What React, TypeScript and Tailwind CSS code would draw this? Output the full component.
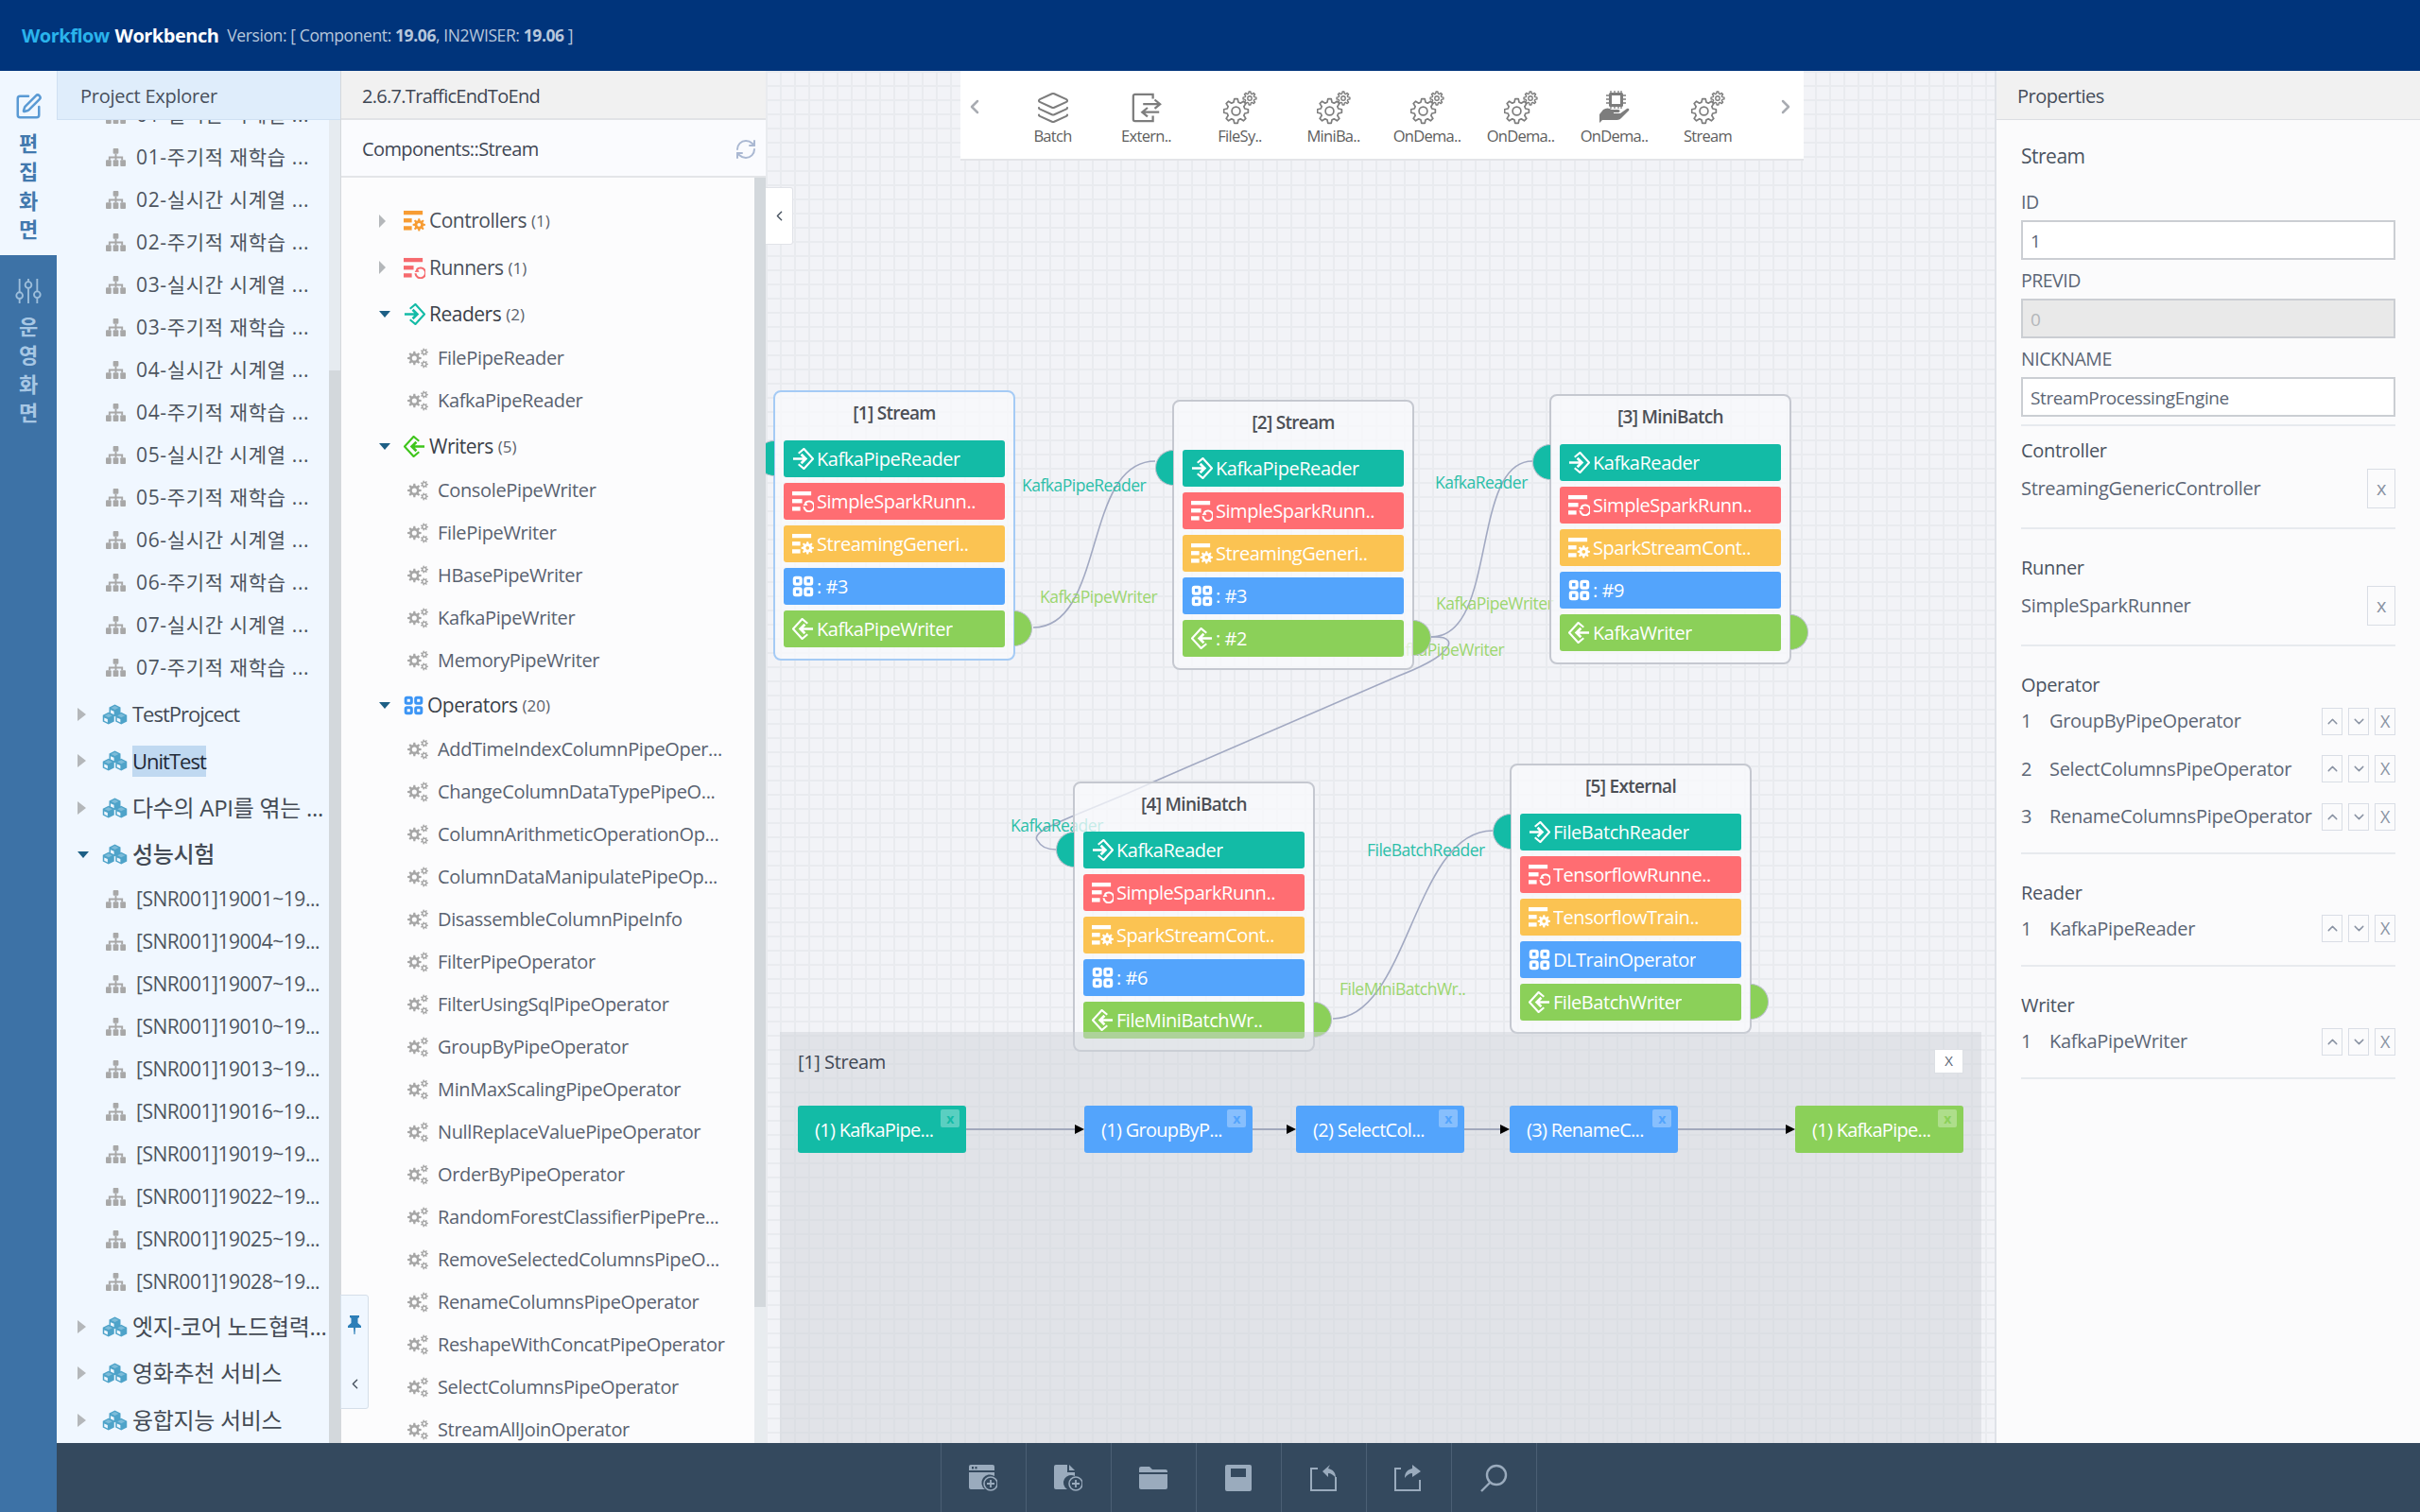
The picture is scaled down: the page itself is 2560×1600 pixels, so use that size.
import type { ReactNode } from "react";
import { ChevronLeft, ChevronRight, ChevronUp, ChevronDown, Layers, RefreshCw, SquarePen } from "lucide-react";

type RowKind = "reader" | "runner" | "controller" | "operator" | "writer";

interface NodeRow {
  kind: RowKind;
  text: string;
}

const rowColors: Record<RowKind, string> = {
  reader: "bg-[#13bba6]",
  runner: "bg-[#ff6d72]",
  controller: "bg-[#fbc352]",
  operator: "bg-[#53a4fc]",
  writer: "bg-[#8bd059]",
};

// outline of a toothed wheel, with an optional round hole
function gearPath(cx: number, cy: number, ro: number, ri: number, teeth: number, hole = 0) {
  const pts: string[] = [];
  const step = (Math.PI * 2) / teeth;
  for (let i = 0; i < teeth; i++) {
    const a = i * step;
    const corners: [number, number][] = [
      [ri, a - step * 0.34],
      [ro, a - step * 0.17],
      [ro, a + step * 0.17],
      [ri, a + step * 0.34],
    ];
    for (const [r, t] of corners) {
      pts.push(`${(cx + r * Math.cos(t)).toFixed(2)} ${(cy + r * Math.sin(t)).toFixed(2)}`);
    }
  }
  let d = `M${pts.join("L")}Z`;
  if (hole > 0) {
    d += `M${cx - hole} ${cy}a${hole} ${hole} 0 1 0 ${hole * 2} 0a${hole} ${hole} 0 1 0 ${-hole * 2} 0Z`;
  }
  return d;
}

function ReaderIcon({ className }: { className?: string }) {
  return (
    <svg viewBox="0 0 24 24" fill="none" stroke="currentColor" strokeWidth="2.2" className={className}>
      <path d="M7 6l6-5 10 11-10 11-6-5" />
      <path d="M1 12h14M10 7l5 5-5 5" strokeWidth="2.8" />
    </svg>
  );
}

function WriterIcon({ className }: { className?: string }) {
  return (
    <svg viewBox="0 0 24 24" fill="none" stroke="currentColor" strokeWidth="2.2" className={className}>
      <path d="M17 6l-6-5L1 12l10 11 6-5" />
      <path d="M23 12H9M14 7l-5 5 5 5" strokeWidth="2.8" />
    </svg>
  );
}

function ControllerIcon({ className }: { className?: string }) {
  return (
    <svg viewBox="0 0 24 24" fill="currentColor" className={className}>
      <rect x="0" y="1" width="21" height="4.5" />
      <rect x="0" y="9.5" width="9" height="4.5" />
      <rect x="0" y="18" width="9" height="4.5" />
      <path fillRule="evenodd" d={gearPath(17, 16.5, 7, 5, 8, 2)} />
    </svg>
  );
}

function RunnerIcon({ className }: { className?: string }) {
  return (
    <svg viewBox="0 0 24 24" fill="currentColor" className={className}>
      <rect x="0" y="1" width="21" height="4.5" />
      <rect x="0" y="9.5" width="11" height="4.5" />
      <rect x="0" y="18" width="9" height="4.5" />
      <path d="M14.8 12.2l-2.6 4.6 5-.4z" />
      <path d="M14.6 13.6a5.6 5.6 0 1 1-1.6 4.4" fill="none" stroke="currentColor" strokeWidth="2.2" />
    </svg>
  );
}

function OperatorIcon({ className }: { className?: string }) {
  return (
    <svg viewBox="0 0 24 24" fill="none" stroke="currentColor" strokeWidth="3.4" className={className}>
      <rect x="2.5" y="2.5" width="7" height="7" rx="1.5" />
      <rect x="14.5" y="2.5" width="7" height="7" rx="1.5" />
      <rect x="2.5" y="14.5" width="7" height="7" rx="1.5" />
      <rect x="14.5" y="14.5" width="7" height="7" rx="1.5" />
    </svg>
  );
}

const rowIcons = {
  reader: ReaderIcon,
  runner: RunnerIcon,
  controller: ControllerIcon,
  operator: OperatorIcon,
  writer: WriterIcon,
};

function GearsIcon({ className }: { className?: string }) {
  return (
    <svg viewBox="0 0 24 24" fill="currentColor" className={className}>
      <path fillRule="evenodd" d={gearPath(8, 12, 8, 5.6, 8, 2.8)} />
      <path fillRule="evenodd" d={gearPath(19.5, 5, 4.4, 3, 7, 1.5)} />
      <path fillRule="evenodd" d={gearPath(19.5, 19, 4.4, 3, 7, 1.5)} />
    </svg>
  );
}

function OutlineGears({ className }: { className?: string }) {
  return (
    <svg viewBox="0 0 36 36" fill="none" stroke="currentColor" strokeWidth="1.7" className={className}>
      <path d={gearPath(13.5, 21.5, 13, 9.6, 8)} strokeLinejoin="round" />
      <circle cx="13.5" cy="21.5" r="4.4" />
      <path d={gearPath(28, 8, 7, 5, 8)} strokeWidth="1.4" strokeLinejoin="round" />
      <circle cx="28" cy="8" r="2.2" strokeWidth="1.4" />
    </svg>
  );
}

function ExternIcon({ className }: { className?: string }) {
  return (
    <svg viewBox="0 0 36 36" fill="none" stroke="currentColor" strokeWidth="2.4" className={className}>
      <path d="M25 8V3H5a2 2 0 0 0-2 2v26a2 2 0 0 0 2 2h20v-6" />
      <path d="M14 14h18M27 9l6 5-6 5" />
      <path d="M32 23H14M19 18l-6 5 6 5" />
    </svg>
  );
}

function AiHandIcon({ className }: { className?: string }) {
  return (
    <svg viewBox="0 0 36 36" fill="currentColor" className={className}>
      <rect x="12" y="2" width="15" height="15" rx="1.5" />
      <path d="M14 0v3M18 0v3M22 0v3M25 0v3M14 16v3M18 16v3M22 16v3M25 16v3M9 5h4M9 9h4M9 13h4M26 5h4M26 9h4M26 13h4" stroke="currentColor" strokeWidth="1.3" />
      <rect x="15" y="5" width="9" height="9" fill="#fff" />
      <path d="M6 20c3-2 6-2 9 0h7c2 0 2 3 0 3h-5v1h7l7-5c2-1 3 1 2 2l-8 8c-2 2-4 2-6 2H5l-3 3V25z" />
    </svg>
  );
}

function SitemapIcon({ className }: { className?: string }) {
  return (
    <svg viewBox="0 0 22 22" fill="currentColor" className={className}>
      <rect x="8" y="1" width="6" height="6" rx="1" />
      <rect x="0" y="14" width="6" height="7" rx="1" />
      <rect x="8" y="14" width="6" height="7" rx="1" />
      <rect x="16" y="14" width="6" height="7" rx="1" />
      <path d="M10 7h2v3h7v4h-2v-2h-5v2h-2v-2H5v2H3v-4h7z" />
    </svg>
  );
}

function CubesIcon({ className }: { className?: string }) {
  const cube = (dx: number, dy: number) => (
    <g transform={`translate(${dx} ${dy})`}>
      <path d="M9 0l8 4v9l-8 4-8-4V4z" fill="#4ea3c9" />
      <path d="M9 2L14.5 4.6 9 7.2 3.5 4.6z" fill="#7dbcd9" />
      <path d="M3 7.5l4.8 2.3v4.5L3 12z" fill="#f0f7ff" />
    </g>
  );
  return (
    <svg viewBox="0 0 36 28" className={className}>
      {cube(9, 0)}
      {cube(0, 11)}
      {cube(18, 11)}
    </svg>
  );
}

function SlidersIcon({ className }: { className?: string }) {
  return (
    <svg viewBox="0 0 28 30" fill="none" stroke="currentColor" strokeWidth="2" className={className}>
      <path d="M4 1v15M4 24v5M14 1v3M14 12v17M24 1v14M24 23v6" />
      <circle cx="4" cy="20" r="3.6" />
      <circle cx="14" cy="8" r="3.6" />
      <circle cx="24" cy="19" r="3.6" />
    </svg>
  );
}

function PinIcon({ className }: { className?: string }) {
  return (
    <svg viewBox="0 0 16 20" fill="currentColor" className={className}>
      <path d="M3 0h10v2l-1.5 1v5L15 11v2H9l-.5 7h-1L7 13H1v-2l3.5-3V3L3 2z" />
    </svg>
  );
}

function NewWindowIcon({ className }: { className?: string }) {
  return (
    <svg viewBox="0 0 30 30" fill="currentColor" className={className}>
      <path d="M2 1h23a2 2 0 0 1 2 2v4H0V3a2 2 0 0 1 2-2z" />
      <path d="M0 9h27v4a8 8 0 0 0-10 14H2a2 2 0 0 1-2-2z" />
      <circle cx="23" cy="21" r="7" fill="none" stroke="currentColor" strokeWidth="1.6" />
      <path d="M23 17v8M19 21h8" stroke="currentColor" strokeWidth="1.8" />
      <rect x="3" y="3" width="2" height="2.4" fill="#34495e" />
      <rect x="6.5" y="3" width="2" height="2.4" fill="#34495e" />
    </svg>
  );
}

function NewFileIcon({ className }: { className?: string }) {
  return (
    <svg viewBox="0 0 30 30" fill="currentColor" className={className}>
      <path d="M2 1h12v8h8v4a8 8 0 0 0-8 14H2a2 2 0 0 1-2-2V3a2 2 0 0 1 2-2z" />
      <path d="M16 1l6 6h-6z" />
      <circle cx="23" cy="21" r="7" fill="none" stroke="currentColor" strokeWidth="1.6" />
      <path d="M23 17v8M19 21h8" stroke="currentColor" strokeWidth="1.8" />
    </svg>
  );
}

function FolderIcon({ className }: { className?: string }) {
  return (
    <svg viewBox="0 0 30 30" fill="currentColor" className={className}>
      <path d="M2 3h9l3 3h14a2 2 0 0 1 2 2v1H0V5a2 2 0 0 1 2-2z" />
      <path d="M0 11h30v14a2 2 0 0 1-2 2H2a2 2 0 0 1-2-2z" />
    </svg>
  );
}

function SaveIcon({ className }: { className?: string }) {
  return (
    <svg viewBox="0 0 30 30" fill="currentColor" className={className}>
      <path fillRule="evenodd" d="M3 1h24a2 2 0 0 1 2 2v24a2 2 0 0 1-2 2H3a2 2 0 0 1-2-2V3a2 2 0 0 1 2-2zm4 4v9h16V5z" />
    </svg>
  );
}

function ImportIcon({ className }: { className?: string }) {
  return (
    <svg viewBox="0 0 30 30" fill="none" stroke="currentColor" strokeWidth="2" className={className}>
      <path d="M9 5H2v23h26V14" />
      <path d="M22 1l-8 7 6 6v-4c3 0 6 2 8 5 0-6-3-9-8-10z" fill="currentColor" stroke="none" />
    </svg>
  );
}

function ExportIcon({ className }: { className?: string }) {
  return (
    <svg viewBox="0 0 30 30" fill="none" stroke="currentColor" strokeWidth="2" className={className}>
      <path d="M7 5H1v23h26V17" />
      <path d="M19 1l9 7-9 6v-4c-3 0-6 2-8 5 0-6 3-9 8-10z" fill="currentColor" stroke="none" />
    </svg>
  );
}

function SearchIcon({ className }: { className?: string }) {
  return (
    <svg viewBox="0 0 30 30" fill="none" stroke="currentColor" strokeWidth="2.4" className={className}>
      <circle cx="18" cy="12" r="10" />
      <path d="M11 20l-9 9" />
    </svg>
  );
}

function FlowNode({
  title,
  rows,
  pos,
  selected,
}: {
  title: string;
  rows: NodeRow[];
  pos: string;
  selected?: boolean;
}) {
  return (
    <div
      className={`absolute ${pos} h-[286px] w-[256px] rounded-[8px] border-2 bg-[#f8f9fc]/75 ${
        selected ? "border-[#a5cbf5]" : "border-[#c5c8d0]"
      }`}
    >
      {/* ports */}
      <div className="absolute -left-[20px] top-[51px] h-[38px] w-[19px] rounded-l-full border border-[#b9bfca] border-r-0 bg-[#13bba6]" />
      <div className="absolute -right-[20px] top-[231px] h-[38px] w-[19px] rounded-r-full border border-[#b9bfca] border-l-0 bg-[#8bd059]" />

      <div className="flex h-[51px] items-center justify-center pb-[7px] text-[19px] font-semibold tracking-[-0.7px] text-[#4c4f55]">
        {title}
      </div>
      <div className="flex flex-col gap-[6px] px-[9px]">
        {rows.map((row, i) => {
          const Icon = rowIcons[row.kind];
          return (
            <div
              key={i}
              className={`flex h-[39px] items-center gap-[3px] rounded-[3px] pl-[9px] text-[20px] tracking-[-0.45px] text-white ${rowColors[row.kind]}`}
            >
              <Icon className="h-[23px] w-[23px] shrink-0" />
              <span className="truncate">{row.text}</span>
            </div>
          );
        })}
      </div>
    </div>
  );
}

const nodes = [
  {
    title: "[1] Stream",
    pos: "left-[8px] top-[338px]",
    selected: true,
    rows: [
      { kind: "reader", text: "KafkaPipeReader" },
      { kind: "runner", text: "SimpleSparkRunn.." },
      { kind: "controller", text: "StreamingGeneri.." },
      { kind: "operator", text: ": #3" },
      { kind: "writer", text: "KafkaPipeWriter" },
    ],
  },
  {
    title: "[2] Stream",
    pos: "left-[430px] top-[348px]",
    rows: [
      { kind: "reader", text: "KafkaPipeReader" },
      { kind: "runner", text: "SimpleSparkRunn.." },
      { kind: "controller", text: "StreamingGeneri.." },
      { kind: "operator", text: ": #3" },
      { kind: "writer", text: ": #2" },
    ],
  },
  {
    title: "[3] MiniBatch",
    pos: "left-[829px] top-[342px]",
    rows: [
      { kind: "reader", text: "KafkaReader" },
      { kind: "runner", text: "SimpleSparkRunn.." },
      { kind: "controller", text: "SparkStreamCont.." },
      { kind: "operator", text: ": #9" },
      { kind: "writer", text: "KafkaWriter" },
    ],
  },
  {
    title: "[4] MiniBatch",
    pos: "left-[325px] top-[752px]",
    rows: [
      { kind: "reader", text: "KafkaReader" },
      { kind: "runner", text: "SimpleSparkRunn.." },
      { kind: "controller", text: "SparkStreamCont.." },
      { kind: "operator", text: ": #6" },
      { kind: "writer", text: "FileMiniBatchWr.." },
    ],
  },
  {
    title: "[5] External",
    pos: "left-[787px] top-[733px]",
    rows: [
      { kind: "reader", text: "FileBatchReader" },
      { kind: "runner", text: "TensorflowRunne.." },
      { kind: "controller", text: "TensorflowTrain.." },
      { kind: "operator", text: "DLTrainOperator" },
      { kind: "writer", text: "FileBatchWriter" },
    ],
  },
] as { title: string; pos: string; selected?: boolean; rows: NodeRow[] }[];

const edgeLabels = [
  { text: "KafkaPipeReader", pos: "left-[271px] top-[426px]", color: "text-[#2cbfa9]" },
  { text: "KafkaPipeWriter", pos: "left-[290px] top-[544px]", color: "text-[#9cd66f]" },
  { text: "KafkaReader", pos: "left-[708px] top-[423px]", color: "text-[#2cbfa9]" },
  { text: "KafkaPipeWriter", pos: "left-[709px] top-[551px]", color: "text-[#9cd66f]" },
  { text: "KafkaPipeWriter", pos: "left-[657px] top-[600px]", color: "text-[#9cd66f]" },
  { text: "KafkaReader", pos: "left-[259px] top-[786px]", color: "text-[#2cbfa9]" },
  { text: "FileBatchReader", pos: "left-[636px] top-[812px]", color: "text-[#2cbfa9]" },
  { text: "FileMiniBatchWr..", pos: "left-[607px] top-[959px]", color: "text-[#9cd66f]" },
];

const paletteItems = [
  { label: "Batch", icon: "layers" },
  { label: "Extern..", icon: "extern" },
  { label: "FileSy..", icon: "gears" },
  { label: "MiniBa..", icon: "gears" },
  { label: "OnDema..", icon: "gears" },
  { label: "OnDema..", icon: "gears" },
  { label: "OnDema..", icon: "ai" },
  { label: "Stream", icon: "gears" },
];

const pipeline = [
  { text: "(1) KafkaPipe...", color: "bg-[#13bba6]", mark: "text-[#13bba6]", gap: "w-[125px]" },
  { text: "(1) GroupByP...", color: "bg-[#53a4fc]", mark: "text-[#53a4fc]", gap: "w-[46px]" },
  { text: "(2) SelectCol...", color: "bg-[#53a4fc]", mark: "text-[#53a4fc]", gap: "w-[48px]" },
  { text: "(3) RenameC...", color: "bg-[#53a4fc]", mark: "text-[#53a4fc]", gap: "w-[124px]" },
  { text: "(1) KafkaPipe...", color: "bg-[#8bd059]", mark: "text-[#8bd059]", gap: "" },
];

const projectRows = [
  "01-실시간 시계열 ...",
  "01-주기적 재학습 ...",
  "02-실시간 시계열 ...",
  "02-주기적 재학습 ...",
  "03-실시간 시계열 ...",
  "03-주기적 재학습 ...",
  "04-실시간 시계열 ...",
  "04-주기적 재학습 ...",
  "05-실시간 시계열 ...",
  "05-주기적 재학습 ...",
  "06-실시간 시계열 ...",
  "06-주기적 재학습 ...",
  "07-실시간 시계열 ...",
  "07-주기적 재학습 ...",
];

const perfRows = ["19001", "19004", "19007", "19010", "19013", "19016", "19019", "19022", "19025", "19028"];

const operators = [
  "AddTimeIndexColumnPipeOper...",
  "ChangeColumnDataTypePipeO...",
  "ColumnArithmeticOperationOp...",
  "ColumnDataManipulatePipeOp...",
  "DisassembleColumnPipeInfo",
  "FilterPipeOperator",
  "FilterUsingSqlPipeOperator",
  "GroupByPipeOperator",
  "MinMaxScalingPipeOperator",
  "NullReplaceValuePipeOperator",
  "OrderByPipeOperator",
  "RandomForestClassifierPipePre...",
  "RemoveSelectedColumnsPipeO...",
  "RenameColumnsPipeOperator",
  "ReshapeWithConcatPipeOperator",
  "SelectColumnsPipeOperator",
  "StreamAllJoinOperator",
];

const writers = ["ConsolePipeWriter", "FilePipeWriter", "HBasePipeWriter", "KafkaPipeWriter", "MemoryPipeWriter"];

function ProjectRow({ text, korean }: { text: string; korean?: boolean }) {
  return (
    <div
      className={`flex h-[45px] items-center pl-[52px] text-[21px] text-[#4d5560] ${
        korean ? "tracking-[0.65px]" : "tracking-[-0.45px]"
      }`}
    >
      <SitemapIcon className="mr-[11px] h-[21px] w-[21px] shrink-0 text-[#a8a8a8]" />
      <span className="whitespace-nowrap">{text}</span>
    </div>
  );
}

function ProjectGroup({
  text,
  open,
  selected,
  korean,
}: {
  text: string;
  open?: boolean;
  selected?: boolean;
  korean?: boolean;
}) {
  return (
    <div
      className={`flex h-[49.5px] items-center pl-[22px] text-[#444b55] ${
        korean ? "text-[24px] tracking-[-0.3px]" : "text-[22px] tracking-[-1px]"
      }`}
    >
      {open ? (
        <span className="mr-[14px] h-0 w-0 border-x-[6px] border-t-[7px] border-x-transparent border-t-[#1d5f85]" />
      ) : (
        <span className="mr-[17px] h-0 w-0 border-y-[7px] border-l-[9px] border-y-transparent border-l-[#b4b7ba]" />
      )}
      <CubesIcon className="mr-[5px] h-[24px] w-[27px] shrink-0" />
      <span
        className={`whitespace-nowrap ${selected ? "bg-[#c0d9f1] text-[#1f2937]" : ""} ${open ? "font-medium" : ""}`}
      >
        {text}
      </span>
    </div>
  );
}

function Category({
  label,
  count,
  open,
  icon,
}: {
  label: string;
  count: string;
  open?: boolean;
  icon: ReactNode;
}) {
  return (
    <div className="flex h-[49.5px] items-center pl-[40px] text-[21px] text-[#4a505a]">
      {open ? (
        <span className="mr-[14px] h-0 w-0 border-x-[6px] border-t-[7px] border-x-transparent border-t-[#1d5f85]" />
      ) : (
        <span className="mr-[19px] h-0 w-0 border-y-[7px] border-l-[7px] border-y-transparent border-l-[#b4b7ba]" />
      )}
      {icon}
      <span className={`ml-[4px] tracking-[-0.5px] ${open ? "font-medium text-[#3b4149]" : ""}`}>{label}</span>
      <span className="ml-[5px] text-[17px] text-[#5b626c]">{count}</span>
    </div>
  );
}

function Item({ text }: { text: string }) {
  return (
    <div className="flex h-[45px] items-center pb-[2px] pl-[70px] text-[20px] tracking-[-0.35px] text-[#596270]">
      <GearsIcon className="mr-[10px] h-[22px] w-[22px] shrink-0 text-[#a6a6a6]" />
      <span className="whitespace-nowrap">{text}</span>
    </div>
  );
}

function SmallButton({ children }: { children: ReactNode }) {
  return (
    <div className="flex h-[29px] w-[22px] items-center justify-center border border-[#d9dde5] text-[#8a93a3]">
      {children}
    </div>
  );
}

function PropRow({ index, name }: { index: string; name: string }) {
  return (
    <div className="flex h-[50.5px] items-center text-[20px] tracking-[-0.3px] text-[#5c6675]">
      <span className="w-[30px]">{index}</span>
      <span className="flex-1 whitespace-nowrap">{name}</span>
      <div className="flex gap-[6px]">
        <SmallButton>
          <ChevronUp className="h-[17px] w-[17px]" />
        </SmallButton>
        <SmallButton>
          <ChevronDown className="h-[17px] w-[17px]" />
        </SmallButton>
        <SmallButton>
          <span className="text-[18px]">X</span>
        </SmallButton>
      </div>
    </div>
  );
}

export default function App() {
  return (
    <div className="flex h-[1600px] w-[2560px] flex-col overflow-hidden bg-white font-['Open_Sans','Noto_Sans_CJK_KR',sans-serif]">
      {/* Top */}
      <header className="flex h-[75px] shrink-0 items-center bg-[#00347b] pl-[23px]">
        <span className="text-[20px] font-bold tracking-[-0.5px] text-[#2ab3ec]">Workflow</span>
        <span className="ml-[6px] text-[20px] font-bold tracking-[-0.5px] text-white">Workbench</span>
        <span className="ml-[9px] text-[17.5px] tracking-[-0.4px] text-[#b7c7dc]">
          Version: [ Component: <b>19.06</b>, IN2WISER: <b>19.06</b> ]
        </span>
      </header>

      <div className="flex min-h-0 flex-1">
        {/* Rail */}
        <aside className="flex w-[60px] shrink-0 flex-col bg-[#3d72a6]">
          <div className="flex h-[195px] flex-col items-center bg-[#f0f7ff] pt-[23px] text-[22px] font-semibold text-[#4279ae]">
            <SquarePen className="mb-[8px] h-[30px] w-[30px] text-[#5a9ad4]" />
            <span className="leading-[30.4px]">편</span>
            <span className="leading-[30.4px]">집</span>
            <span className="leading-[30.4px]">화</span>
            <span className="leading-[30.4px]">면</span>
          </div>
          <div className="flex flex-col items-center pt-[24px] text-[22px] font-semibold text-[#a7c7e4]">
            <SlidersIcon className="mb-[8px] h-[28px] w-[28px] text-[#9dbedb]" />
            <span className="leading-[30.4px]">운</span>
            <span className="leading-[30.4px]">영</span>
            <span className="leading-[30.4px]">화</span>
            <span className="leading-[30.4px]">면</span>
          </div>
        </aside>

        <div className="flex min-w-0 flex-1 flex-col">
          <div className="flex min-h-0 flex-1">
            {/* Project explorer */}
            <section className="flex w-[300px] shrink-0 flex-col bg-[#f0f7ff]">
              <div className="relative z-10 flex h-[52px] shrink-0 items-center border-b border-l border-[#cfe0f2] bg-[#dfedfb] pl-[24px] pt-[2px] text-[20px] tracking-[-0.25px] text-[#474f5c]">
                Project Explorer
              </div>
              <div className="flex min-h-0 flex-1">
                <div className="min-w-0 flex-1 overflow-hidden">
                  <div className="-mt-[28px]">
                    {projectRows.map((t, i) => (
                      <ProjectRow key={i} text={t} korean />
                    ))}
                    <div className="h-[2px]" />
                    <ProjectGroup text="TestProjcect" />
                    <ProjectGroup text="UnitTest" selected />
                    <ProjectGroup text="다수의 API를 엮는 ..." korean />
                    <ProjectGroup text="성능시험" open korean />
                    {perfRows.map((n) => (
                      <ProjectRow key={n} text={`[SNR001]${n}~19...`} />
                    ))}
                    <ProjectGroup text="엣지-코어 노드협력..." korean />
                    <ProjectGroup text="영화추천 서비스" korean />
                    <ProjectGroup text="융합지능 서비스" korean />
                  </div>
                </div>
                <div className="flex w-[12px] shrink-0 flex-col bg-[#d3d8dc]">
                  <div className="h-[265px] bg-[#e6ebf0]" />
                </div>
              </div>
            </section>

            {/* Components */}
            <section className="relative flex w-[450px] shrink-0 flex-col border-l border-[#d5d8dc] bg-[#fcfcfd]">
              <div className="flex h-[52px] shrink-0 items-center border-b-2 border-[#e1e3e6] bg-[#f1f1f1] pl-[22px] pt-[3px] text-[20px] tracking-[-0.7px] text-[#3f4754]">
                2.6.7.TrafficEndToEnd
              </div>
              <div className="flex h-[61px] shrink-0 items-center justify-between border-b-2 border-[#e3e5e8] bg-[#fafbfe] pl-[22px] pr-[9px] pt-[2px] text-[20px] tracking-[-0.6px] text-[#3f4754]">
                <span>Components::Stream</span>
                <RefreshCw className="h-[24px] w-[24px] text-[#aab8d2]" />
              </div>
              <div className="flex min-h-0 flex-1">
                <div className="min-w-0 flex-1 overflow-hidden pt-[21px]">
                  <Category
                    label="Controllers"
                    count="(1)"
                    icon={<ControllerIcon className="h-[23px] w-[23px] text-[#f79c33]" />}
                  />
                  <Category
                    label="Runners"
                    count="(1)"
                    icon={<RunnerIcon className="h-[23px] w-[23px] text-[#f66a6e]" />}
                  />
                  <Category
                    label="Readers"
                    count="(2)"
                    open
                    icon={<ReaderIcon className="h-[23px] w-[23px] text-[#13bba6]" />}
                  />
                  <Item text="FilePipeReader" />
                  <Item text="KafkaPipeReader" />
                  <Category
                    label="Writers"
                    count="(5)"
                    open
                    icon={<WriterIcon className="h-[23px] w-[23px] text-[#3fc51c]" />}
                  />
                  {writers.map((w) => (
                    <Item key={w} text={w} />
                  ))}
                  <Category
                    label="Operators"
                    count="(20)"
                    open
                    icon={<OperatorIcon className="h-[21px] w-[21px] text-[#3c95f5]" />}
                  />
                  {operators.map((o) => (
                    <Item key={o} text={o} />
                  ))}
                </div>
                <div className="flex w-[12px] shrink-0 flex-col bg-[#e8ecef]">
                  <div className="h-[1195px] bg-[#d3d8dc]" />
                </div>
              </div>

              {/* pin handle */}
              <div className="absolute -left-px bottom-[36px] flex h-[121px] w-[30px] flex-col items-center rounded-r-[3px] border border-[#d5dfe9] bg-[#f0f7ff] pt-[21px] text-[#2d7fb8]">
                <PinIcon className="h-[20px] w-[16px]" />
                <ChevronLeft className="mt-[44px] h-[17px] w-[17px] text-[#47525f]" />
              </div>
            </section>

            {/* Canvas */}
            <main className="relative min-w-0 flex-1 overflow-hidden bg-[#f2f3f7] bg-[linear-gradient(to_right,#e9ebef_2px,transparent_2px),linear-gradient(to_bottom,#e9ebef_2px,transparent_2px)] bg-[size:15px_15px]">
              {/* palette */}
              <div className="absolute left-[206px] top-0 z-20 flex h-[95px] w-[892px] items-start border-b-2 border-[#e3e4e8] bg-white">
                <ChevronLeft className="ml-[3px] mt-[26px] h-[24px] w-[24px] text-[#a9acb2]" strokeWidth={2.5} />
                <div className="ml-[21px] flex">
                  {paletteItems.map((item, i) => (
                    <div key={i} className="flex w-[99px] flex-col items-center pt-[21px] text-[#7d7d7d]">
                      <div className="flex h-[36px] items-center justify-center">
                        {item.icon === "layers" && <Layers className="h-[36px] w-[36px]" strokeWidth={1.4} />}
                        {item.icon === "extern" && <ExternIcon className="h-[34px] w-[34px]" />}
                        {item.icon === "gears" && <OutlineGears className="h-[36px] w-[36px]" />}
                        {item.icon === "ai" && <AiHandIcon className="h-[36px] w-[36px]" />}
                      </div>
                      <span className="whitespace-nowrap text-[16.5px] leading-[24px] tracking-[-0.7px] text-[#5e5e5e]">
                        {item.label}
                      </span>
                    </div>
                  ))}
                </div>
                <ChevronRight className="ml-[21px] mt-[26px] h-[24px] w-[24px] text-[#a9acb2]" strokeWidth={2.5} />
              </div>

              {/* collapse handle */}
              <div className="absolute left-0 top-[123px] z-20 flex h-[61px] w-[29px] items-center justify-center rounded-r-[3px] border border-l-0 border-[#e1e3e8] bg-white">
                <ChevronLeft className="h-[17px] w-[17px] text-[#47525f]" />
              </div>

              {/* edges */}
              <svg
                viewBox="810 75 1300 1452"
                className="absolute inset-0 h-[1452px] w-[1300px]"
                fill="none"
                stroke="#a2a9c2"
                strokeWidth="1.6"
              >
                <path d="M1093 664C1170 664 1145 488 1222 488" />
                <path d="M1514 674C1585 674 1555 488 1621 488" />
                <path d="M1514 674C1545 672 1540 692 1480 715L1221 827C1150 860 1085 878 1098 890C1102 898 1110 899 1117 899" />
                <path d="M1410 1078C1490 1078 1495 879 1579 879" />
              </svg>

              {edgeLabels.map((l, i) => (
                <span
                  key={i}
                  className={`absolute ${l.pos} whitespace-nowrap text-[17.5px] leading-[24px] tracking-[-0.5px] ${l.color}`}
                >
                  {l.text}
                </span>
              ))}

              {nodes.map((n) => (
                <FlowNode key={n.title} title={n.title} pos={n.pos} rows={n.rows} selected={n.selected} />
              ))}

              {/* pipeline detail */}
              <div className="absolute bottom-0 left-[15px] h-[435px] w-[1271px] bg-[#d0d4da]/50 px-[19px]">
                <div className="flex h-[78px] items-center justify-between pb-[15px] text-[20px] tracking-[-0.4px] text-[#3f4754]">
                  <span>[1] Stream</span>
                  <span className="mb-[2px] flex h-[26px] w-[31px] items-center justify-center border border-[#dcdfe4] bg-white text-[15px] text-[#5c6675]">
                    X
                  </span>
                </div>
                <div className="flex items-center">
                  {pipeline.map((p, i) => (
                    <div key={i} className="flex items-center">
                      <div
                        className={`relative flex h-[50px] w-[178px] items-center rounded-[3px] pl-[18px] pt-[2px] text-[20px] tracking-[-0.7px] text-white ${p.color}`}
                      >
                        <span className="whitespace-nowrap">{p.text}</span>
                        <span
                          className={`absolute right-[7px] top-[4px] flex h-[19px] w-[20px] items-center justify-center rounded-[2px] bg-white/30 text-[14px] font-bold leading-none ${p.mark}`}
                        >
                          x
                        </span>
                      </div>
                      {p.gap && (
                        <div className={`flex items-center ${p.gap}`}>
                          <div className="h-[2px] flex-1 bg-[#a2a9bc]" />
                          <div className="h-0 w-0 border-y-[5px] border-l-[10px] border-y-transparent border-l-black" />
                        </div>
                      )}
                    </div>
                  ))}
                </div>
              </div>
            </main>

            {/* Properties */}
            <aside className="flex w-[450px] shrink-0 flex-col border-l-2 border-[#dfe2e8] bg-[#fbfbfc]">
              <div className="flex h-[52px] shrink-0 items-center border-b border-[#dcdee2] bg-[#f1f1f1] pl-[22px] pt-[2px] text-[20px] font-medium tracking-[-0.5px] text-[#454d5a]">
                Properties
              </div>
              <div className="flex flex-col px-[26px] text-[20px] tracking-[-0.3px] text-[#5c6675]">
                <div className="mt-[24px] text-[21px] font-medium leading-[28px] tracking-[-0.5px] text-[#4a5361]">
                  Stream
                </div>
                <div className="mt-[22px] text-[19.5px] leading-[26px] tracking-[-0.5px]">ID</div>
                <div className="mt-[6px] flex h-[42px] items-center border-2 border-[#cbced3] bg-white pl-[8px] pt-[2px] text-[19px] tracking-[-0.4px]">
                  1
                </div>
                <div className="mt-[9px] text-[19.5px] leading-[26px] tracking-[-0.5px]">PREVID</div>
                <div className="mt-[6px] flex h-[42px] items-center border-2 border-[#cbced3] bg-[#e9e9e9] pl-[8px] pt-[2px] text-[19px] text-[#b3b6ba]">
                  0
                </div>
                <div className="mt-[9px] text-[19.5px] leading-[26px] tracking-[-0.5px]">NICKNAME</div>
                <div className="mt-[6px] flex h-[42px] items-center border-2 border-[#cbced3] bg-white pl-[8px] pt-[2px] text-[19px] tracking-[-0.4px]">
                  StreamProcessingEngine
                </div>
                <div className="mt-[8px] border-t-2 border-[#e7eaee]" />

                <div className="mt-[12px] font-medium leading-[27px] text-[#4a5361]">Controller</div>
                <div className="mt-[6px] flex h-[42px] items-center justify-between">
                  <span>StreamingGenericController</span>
                  <span className="flex h-[42px] w-[30px] items-center justify-center border border-[#d9dde5] text-[#8a93a3]">
                    x
                  </span>
                </div>
                <div className="mt-[20px] border-t-2 border-[#e7eaee]" />

                <div className="mt-[27px] font-medium leading-[27px] text-[#4a5361]">Runner</div>
                <div className="mt-[6px] flex h-[42px] items-center justify-between">
                  <span>SimpleSparkRunner</span>
                  <span className="flex h-[42px] w-[30px] items-center justify-center border border-[#d9dde5] text-[#8a93a3]">
                    x
                  </span>
                </div>
                <div className="mt-[20px] border-t-2 border-[#e7eaee]" />

                <div className="mt-[27px] font-medium leading-[27px] text-[#4a5361]">Operator</div>
                <PropRow index="1" name="GroupByPipeOperator" />
                <PropRow index="2" name="SelectColumnsPipeOperator" />
                <PropRow index="3" name="RenameColumnsPipeOperator" />
                <div className="mt-[12px] border-t-2 border-[#e7eaee]" />

                <div className="mt-[27px] font-medium leading-[27px] text-[#4a5361]">Reader</div>
                <PropRow index="1" name="KafkaPipeReader" />
                <div className="mt-[13px] border-t-2 border-[#e7eaee]" />

                <div className="mt-[27px] font-medium leading-[27px] text-[#4a5361]">Writer</div>
                <PropRow index="1" name="KafkaPipeWriter" />
                <div className="mt-[12px] border-t-2 border-[#e7eaee]" />
              </div>
            </aside>
          </div>

          {/* Bottom */}
          <footer className="flex h-[73px] shrink-0 justify-center bg-[#34495e] text-[#9aabbd]">
            <div className="flex border-r border-[#4b5f74]">
              {[NewWindowIcon, NewFileIcon, FolderIcon, SaveIcon, ImportIcon, ExportIcon, SearchIcon].map((Icon, i) => (
                <div key={i} className="flex w-[90px] items-center justify-center border-l border-[#4b5f74]">
                  <Icon className="h-[30px] w-[30px]" />
                </div>
              ))}
            </div>
          </footer>
        </div>
      </div>
    </div>
  );
}
